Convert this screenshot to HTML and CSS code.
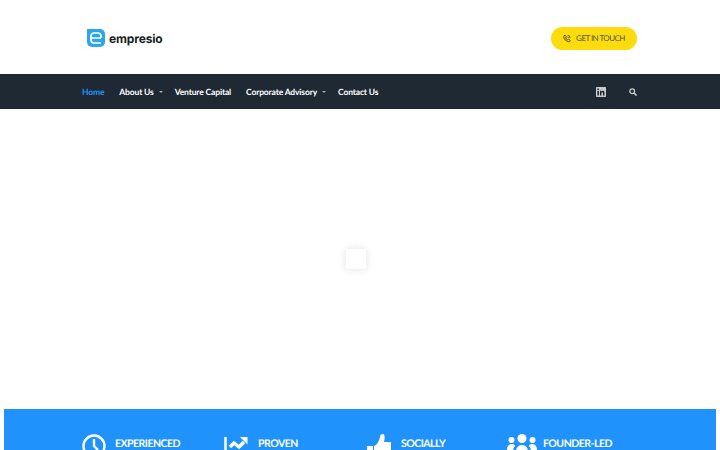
FILE: index.html
```html
<!DOCTYPE html>
<html lang="en">
<head>
    <meta charset="UTF-8">
    <meta name="viewport" content="width=device-width, initial-scale=1.0">
    <title>Empresio</title>
    <link rel="stylesheet" href="styles.css">
</head>
<body>
    <header class="top">
        <a class="logo" href="#">
            <svg class="logo-mark" width="18" height="18" viewBox="0 0 18 18">
                <path d="M0 0h13a5 5 0 0 1 5 5v8a5 5 0 0 1-5 5H5a5 5 0 0 1-5-5z" fill="#2aa5ee"/>
                <path d="M4 9h10M14 9V7a3 3 0 0 0-3-3H7a3 3 0 0 0-3 3v4a3 3 0 0 0 3 3h7" fill="none" stroke="#fff" stroke-width="1.700"/>
            </svg>
            <span>empresio</span>
        </a>
        <a class="touch" href="#">
            <svg width="8" height="9" viewBox="0 0 24 24" fill="none" stroke="#333" stroke-width="2.500">
                <path d="M6 2l4 5-2 3c1 3 3 5 6 6l3-2 5 4-3 4C10 22 2 14 2 5z"/>
                <path d="M14 3a7 7 0 0 1 7 7M14 8a2 2 0 0 1 2 2"/>
            </svg>
            GET IN TOUCH
        </a>
    </header>

    <nav class="nav">
        <a class="nav-link active" href="#">Home</a>
        <a class="nav-link has-sub" href="#">About Us</a>
        <a class="nav-link" href="#">Venture Capital</a>
        <a class="nav-link has-sub" href="#">Corporate Advisory</a>
        <a class="nav-link" href="#">Contact Us</a>
        <div class="nav-icons">
            <svg width="10" height="10" viewBox="0 0 10 10">
                <path fill-rule="evenodd" fill="#c9cbce" d="M0 .8A.8.8 0 0 1 .8 0h8.400a.8.8 0 0 1 .8.8v8.400a.8.8 0 0 1-.8.8H.8a.8.8 0 0 1-.8-.8zM1.400 3.800v4.700h1.500V3.800zM1.400 1.600v1.400h1.500V1.600zM4 3.800v4.700h1.500V6c0-1 1.500-1 1.500 0v2.500h1.500V5.500c0-2-2.200-2-3-1V3.800z"/>
            </svg>
            <svg width="8" height="8" viewBox="0 0 9 9" fill="none" stroke="#c9cbce">
                <circle cx="3.600" cy="3.600" r="2.700" stroke-width="1.400"/>
                <path d="M5.600 5.600L8.500 8.500" stroke-width="1.800"/>
            </svg>
        </div>
    </nav>

    <main class="hero">
        <div class="loader"></div>
    </main>

    <section class="band">
        <div class="feature feature-1">
            <svg width="24" height="24" viewBox="0 0 24 24" fill="none" stroke="#fff" stroke-width="2.400">
                <circle cx="12" cy="12" r="10.500"/>
                <path d="M12 5v7l4 4"/>
            </svg>
            <span>EXPERIENCED</span>
        </div>
        <div class="feature feature-2">
            <svg width="24" height="24" viewBox="0 0 24 24" fill="none" stroke="#fff">
                <path d="M1.500 3v21" stroke-width="2.500"/>
                <path d="M6 13l4-4 5 4 5-5" stroke-width="3.500"/>
                <path d="M16 3h7.500v7.500z" fill="#fff" stroke="none"/>
            </svg>
            <span>PROVEN</span>
        </div>
        <div class="feature feature-3">
            <svg width="24" height="24" viewBox="0 0 24 24" fill="#fff">
                <path d="M0 12h6v12H0zM7 12c3-1 5-5 6-9 0-2 1-3 3-3 2 1 2 4 1 8h6a1.500 1.500 0 0 1 1 3v13H7z"/>
            </svg>
            <span>SOCIALLY</span>
        </div>
        <div class="feature feature-4">
            <svg width="30" height="24" viewBox="0 0 30 24" fill="#fff">
                <circle cx="4.500" cy="6" r="3"/>
                <circle cx="15" cy="4.500" r="4.500"/>
                <circle cx="25.500" cy="6" r="3"/>
                <path d="M0 16c0-4 2-6 5-6 2 0 3 1 3 2-1 1-2 3-2 6H0zM8 24c0-8 2-13 7-13s7 5 7 13zM30 16c0-4-2-6-5-6-2 0-3 1-3 2 1 1 2 3 2 6h6z"/>
            </svg>
            <span>FOUNDER-LED</span>
        </div>
    </section>
</body>
</html>
```

FILE: styles.css
```css
html, body {
    height: 450px;
    overflow: hidden;
}
body {
    margin: 0;
    font-family: "Lato", sans-serif;
    background-color: #fff;
    color: #333;
    text-rendering: geometricPrecision;
}
a {
    text-decoration: none;
}
.top {
    height: 74px;
    box-sizing: border-box;
    padding: 0 83px 0 87px;
    display: flex;
    align-items: center;
    justify-content: space-between;
}
.logo {
    display: flex;
    align-items: center;
    gap: 4px;
    margin-top: 2px;
    font-family: "Inter", sans-serif;
    font-size: 12px;
    letter-spacing: -0.15px;
    font-weight: 700;
    color: #1b1f24;
}
.touch {
    width: 86px;
    height: 23px;
    border-radius: 12px;
    background-color: #fcdc0c;
    color: #555;
    font-size: 8px;
    letter-spacing: -0.55px;
    display: flex;
    align-items: center;
    justify-content: center;
    gap: 5px;
    margin-top: 2px;
}
.nav {
    height: 35px;
    background-color: #1f2933;
    display: flex;
    align-items: center;
    padding: 0 82px;
    font-size: 8.500px;
    letter-spacing: -0.15px;
    font-weight: 700;
}
.nav-link {
    color: #fff;
    margin-right: 15px;
}
.nav-link.active {
    color: #1f93fb;
}
.has-sub {
    margin-right: 12px;
}
.has-sub::after {
    content: "";
    display: inline-block;
    margin-left: 5px;
    vertical-align: middle;
    border-left: 2px solid transparent;
    border-right: 2px solid transparent;
    border-top: 2px solid #aaa;
}
.nav-icons {
    margin-left: auto;
    display: flex;
    align-items: center;
    gap: 23px;
    padding-right: 1px;
}
.hero {
    height: 300px;
    box-sizing: border-box;
    padding-right: 8px;
    display: flex;
    align-items: center;
    justify-content: center;
}
.loader {
    width: 20px;
    height: 20px;
    background-color: #fff;
    box-shadow: 0 0 10px rgba(0, 0, 0, 0.12);
}
.band {
    margin: 0 4px;
    height: 60px;
    box-sizing: border-box;
    padding: 25px 0 0 78px;
    background-color: #1f93fb;
    display: flex;
    color: #fff;
    font-size: 10.500px;
    letter-spacing: -0.5px;
    font-weight: 700;
}
.feature {
    display: flex;
    gap: 10px;
    height: 20px;
    align-items: center;
    box-sizing: border-box;
}
.feature svg {
    align-self: flex-start;
}
.feature-1 {
    width: 142px;
    gap: 9px;
}
.feature-2 {
    width: 143px;
}
.feature-3 {
    width: 140px;
}
.feature-4 {
    gap: 6px;
}
```
